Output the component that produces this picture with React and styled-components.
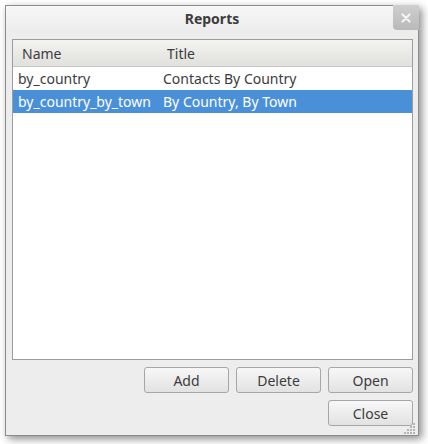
import React, { useState } from 'react'
import styled, { createGlobalStyle } from 'styled-components'

const GlobalStyle = createGlobalStyle`
    html, body {
        margin: 0;
        padding: 0;
        background: #ffffff;
        font-family: "Noto Sans", "DejaVu Sans", sans-serif;
    }
`

const reports = [
    { name: 'by_country', title: 'Contacts By Country' },
    { name: 'by_country_by_town', title: 'By Country, By Town' },
]

function App() {
    const [selected, setSelected] = useState(1)

    return (
        <>
            <GlobalStyle />
            <Page>
                <Window>
                    <TitleBar>
                        <span />
                        <Title>Reports</Title>
                        <CloseX aria-label="close">
                            <svg width="10" height="10" viewBox="0 0 10 10">
                                <path d="M1.5 1.5 L8.5 8.5 M8.5 1.5 L1.5 8.5" stroke="#f4f4f4" strokeWidth="2.2" strokeLinecap="round" />
                            </svg>
                        </CloseX>
                    </TitleBar>
                    <Body>
                        <ListFrame>
                            <HeaderRow>
                                <HeaderCell>Name</HeaderCell>
                                <HeaderCell>Title</HeaderCell>
                            </HeaderRow>
                            {reports.map((r, i) => (
                                <Row key={r.name} $selected={selected === i} onClick={() => setSelected(i)}>
                                    <Cell>{r.name}</Cell>
                                    <Cell>{r.title}</Cell>
                                </Row>
                            ))}
                        </ListFrame>
                        <ButtonRow>
                            <Button>Add</Button>
                            <Button>Delete</Button>
                            <Button>Open</Button>
                        </ButtonRow>
                        <ButtonRow>
                            <Button>Close</Button>
                        </ButtonRow>
                    </Body>
                    <Grip>
                        <svg width="12" height="12" viewBox="0 0 12 12">
                            {[[9, 1], [6, 4], [9, 4], [3, 7], [6, 7], [9, 7], [0, 10], [3, 10], [6, 10], [9, 10]].map(([x, y]) => (
                                <rect key={`${x}-${y}`} x={x} y={y} width="2" height="2" fill="#b4b4b4" />
                            ))}
                        </svg>
                    </Grip>
                </Window>
            </Page>
        </>
    )
}

const Page = styled.div`
    width: 428px;
    height: 444px;
    padding: 5px 0 0 5px;
    box-sizing: border-box;
`

const Window = styled.div`
    position: relative;
    width: 414px;
    height: 431px;
    box-sizing: border-box;
    border: 1px solid #8c8c8c;
    background: #ededed;
    box-shadow: 3px 3px 8px rgba(0, 0, 0, 0.45);
    display: flex;
    flex-direction: column;
`

const TitleBar = styled.div`
    height: 26px;
    display: grid;
    grid-template-columns: 1fr auto 1fr;
    align-items: start;
    background: linear-gradient(#f7f7f7, #ececec);
`

const Title = styled.div`
    font-weight: bold;
    font-size: 14px;
    color: #3c3c3c;
    line-height: 26px;
`

const CloseX = styled.div`
    justify-self: end;
    width: 26px;
    height: 25px;
    margin-top: -1px;
    margin-right: -1px;
    background: linear-gradient(#cfcfcf, #b9b9b9);
    border-bottom-left-radius: 4px;
    display: flex;
    align-items: center;
    justify-content: center;
`

const Body = styled.div`
    flex: 1;
    padding: 7px 5px 0 6px;
    display: flex;
    flex-direction: column;
    gap: 7px;
`

const ListFrame = styled.div`
    height: 321px;
    box-sizing: border-box;
    border: 1px solid #9c9c9c;
    background: #ffffff;
`

const HeaderRow = styled.div`
    height: 26px;
    display: grid;
    grid-template-columns: 145px 1fr;
    align-items: center;
    background: linear-gradient(#f3f3f1, #e0e0dd);
    border-bottom: 1px solid #c6c6c6;
`

const HeaderCell = styled.div`
    padding-left: 9px;
    font-size: 14px;
    color: #3c3c3c;
`

const Row = styled.div`
    height: 23px;
    display: grid;
    grid-template-columns: 145px 1fr;
    align-items: center;
    background: ${({ $selected }) => ($selected ? '#4a90d9' : '#ffffff')};
    color: ${({ $selected }) => ($selected ? '#ffffff' : '#3c3c3c')};
    cursor: default;
`

const Cell = styled.div`
    padding-left: 5px;
    font-size: 14px;
    white-space: nowrap;
    overflow: hidden;
`

const ButtonRow = styled.div`
    display: flex;
    justify-content: flex-end;
    gap: 7px;
`

const Button = styled.button`
    width: 85px;
    height: 26px;
    box-sizing: border-box;
    border: 1px solid #a6a6a6;
    border-radius: 3px;
    background: linear-gradient(#f7f7f7, #e2e2e2);
    font-family: "Noto Sans", "DejaVu Sans", sans-serif;
    font-size: 14px;
    color: #3c3c3c;
    padding: 0;
`

const Grip = styled.div`
    position: absolute;
    right: 2px;
    bottom: 1px;
    line-height: 0;
`

export default App
